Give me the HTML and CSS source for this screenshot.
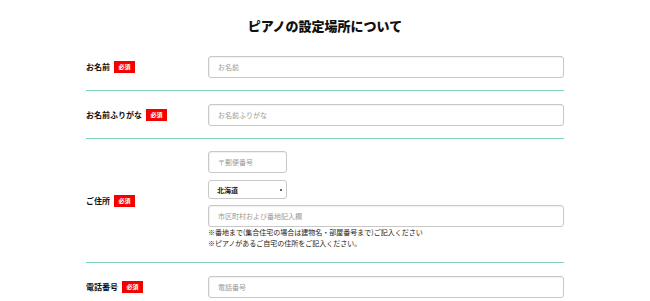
FILE: index.html
```html
<!DOCTYPE html>
<html lang="ja">
  <head>
    <meta charset="UTF-8" />
    <meta name="viewport" content="width=device-width, initial-scale=1.0" />
    <title>ピアノの設定場所について</title>
    <link rel="stylesheet" href="styles.css">
  </head>
  <body>
    <div class="form-container">
      <h2>ピアノの設定場所について</h2>

      <form>
        <div class="form-row">
          <div class="label">お名前<span class="required">必須</span></div>
          <div class="field">
            <input type="text" class="text-input" placeholder="お名前" />
          </div>
        </div>

        <div class="form-row">
          <div class="label">お名前ふりがな<span class="required">必須</span></div>
          <div class="field">
            <input type="text" class="text-input" placeholder="お名前ふりがな" />
          </div>
        </div>

        <div class="form-row">
          <div class="label">ご住所<span class="required">必須</span></div>
          <div class="field address">
            <input type="text" class="text-input short" placeholder="〒郵便番号" />
            <div class="select-wrap">
              <select class="pref">
                <option selected>北海道</option>
                <option>青森県</option>
                <option>岩手県</option>
              </select>
            </div>
            <input type="text" class="text-input" placeholder="市区町村および番地記入欄" />
            <div class="note">
              <span>※番地まで(集合住宅の場合は建物名・部屋番号まで)ご記入ください</span>
              <span>※ピアノがあるご自宅の住所をご記入ください。</span>
            </div>
          </div>
        </div>

        <div class="form-row">
          <div class="label">電話番号<span class="required">必須</span></div>
          <div class="field">
            <input type="tel" class="text-input" placeholder="電話番号" />
          </div>
        </div>
      </form>
    </div>
  </body>
</html>
```

FILE: styles.css
```css
body {
  font-family: "Noto Sans CJK JP", "Noto Sans", sans-serif;
  margin: 0;
  background-color: white;
  color: #111;
}
.form-container {
  width: 478px;
  margin: 0 auto;
}
.form-container h2 {
  font-size: 13px;
  line-height: 20px;
  font-weight: 900;
  text-align: center;
  margin: 16px 0 7px;
}
.form-row {
  display: flex;
  align-items: center;
  padding: 13px 0 12px;
  border-bottom: 1px solid #7fd4b5;
}
.form-row:last-child {
  border-bottom: none;
}
.label {
  width: 122px;
  flex-shrink: 0;
  display: flex;
  align-items: center;
  font-size: 8px;
  line-height: 12px;
  font-weight: bold;
}
.required {
  display: inline-flex;
  justify-content: center;
  align-items: center;
  width: 21px;
  height: 12px;
  margin-left: 4px;
  background-color: #f40000;
  color: white;
  font-size: 6px;
  font-weight: bold;
}
.field {
  flex: 1;
}
.text-input {
  display: block;
  width: 100%;
  height: 22px;
  padding: 0 9px;
  border: 1px solid #c8c8c8;
  border-radius: 3px;
  box-shadow: inset 1px 1px 1px rgba(0, 0, 0, 0.06);
  box-sizing: border-box;
  font-family: inherit;
  font-size: 7px;
  color: #333;
}
.text-input::placeholder {
  color: #999;
}
.text-input.short {
  width: 79px;
}
.address {
  margin: -1px 0 1px;
}
.select-wrap {
  position: relative;
  width: 79px;
  margin: 7px 0 6px;
}
.select-wrap::after {
  content: "";
  position: absolute;
  right: 5px;
  top: 9px;
  width: 2px;
  height: 2px;
  border-radius: 50%;
  background-color: #333;
}
.pref {
  display: block;
  width: 100%;
  height: 19px;
  padding: 0 8px;
  border: 1px solid #c8c8c8;
  border-radius: 3px;
  background-color: white;
  appearance: none;
  -webkit-appearance: none;
  font-family: inherit;
  font-size: 7px;
  font-weight: bold;
  color: #222;
}
.note {
  font-size: 7px;
  color: #222;
}
.note span {
  display: block;
  height: 11px;
  line-height: 11px;
  white-space: nowrap;
}
```
